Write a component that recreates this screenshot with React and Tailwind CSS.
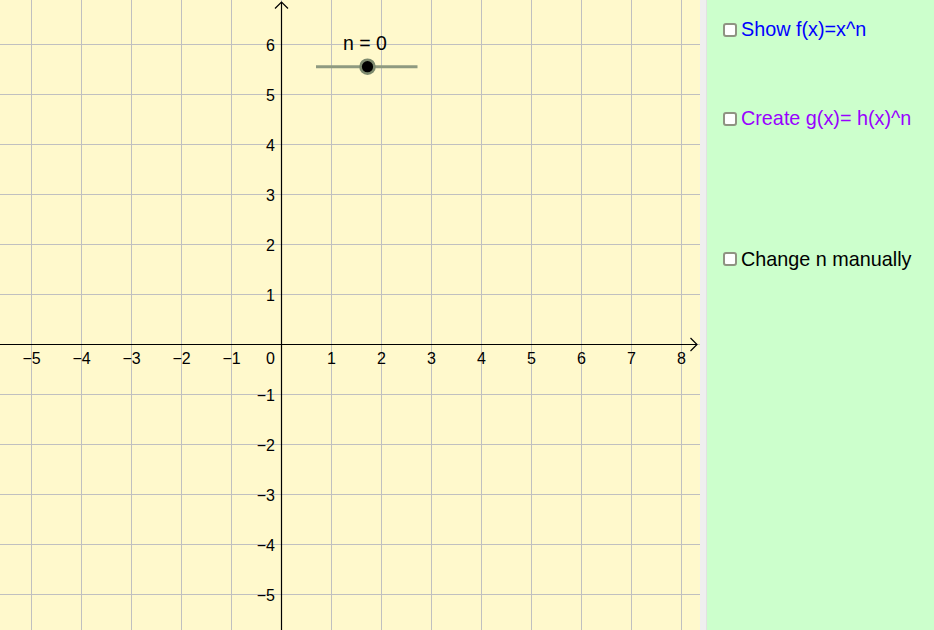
import React from 'react';

const GRID_X = Array.from({ length: 14 }, (_, i) => 31.5 + i * 50);
const GRID_Y = Array.from({ length: 12 }, (_, i) => 44.5 + i * 50);
const ORIGIN_X = 281.5;
const ORIGIN_Y = 344.5;

const fmt = (v) => (v < 0 ? `\u2212${-v}` : `${v}`);

/* ── Graphics view ── */
const Graph = () => (
    <svg width="700" height="630" className="block" style={{ fontFamily: '"Liberation Sans", Arial, sans-serif' }}>
        <rect x="0" y="0" width="700" height="630" fill="#fff9cc" />
        {GRID_X.map((x) => (
            <line key={`gx${x}`} x1={x} y1="0" x2={x} y2="630" stroke="#c0c0c0" strokeWidth="1" />
        ))}
        {GRID_Y.map((y) => (
            <line key={`gy${y}`} x1="0" y1={y} x2="700" y2={y} stroke="#c0c0c0" strokeWidth="1" />
        ))}

        {/* axes */}
        <line x1="0" y1={ORIGIN_Y} x2="697" y2={ORIGIN_Y} stroke="#000" strokeWidth="1.2" />
        <polyline points="690.5,338 697,344.5 690.5,351" fill="none" stroke="#000" strokeWidth="1.2" />
        <line x1={ORIGIN_X} y1="2" x2={ORIGIN_X} y2="630" stroke="#000" strokeWidth="1.2" />
        <polyline points="275,8.5 281.5,2 288,8.5" fill="none" stroke="#000" strokeWidth="1.2" />

        {/* x labels */}
        {GRID_X.map((x, i) => {
            const v = i - 5;
            if (v === 0) return null;
            return (
                <text key={`lx${v}`} x={x} y="363.5" fontSize="16" textAnchor="middle" fill="#000">
                    {fmt(v)}
                </text>
            );
        })}
        <text x="275" y="363.5" fontSize="16" textAnchor="end" fill="#000">0</text>

        {/* y labels */}
        {GRID_Y.map((y, i) => {
            const v = 6 - i;
            if (v === 0) return null;
            return (
                <text key={`ly${v}`} x="275" y={y + 6.5} fontSize="16" textAnchor="end" fill="#000">
                    {fmt(v)}
                </text>
            );
        })}

        {/* slider n */}
        <text x="343" y="49.5" fontSize="19.5" fill="#000">n = 0</text>
        <line x1="316" y1="66.7" x2="417.5" y2="66.7" stroke="#8f9a80" strokeWidth="3" />
        <circle cx="367.5" cy="66.7" r="8.3" fill="#7d8a6e" />
        <circle cx="367.5" cy="66.7" r="5.6" fill="#000" />
    </svg>
);

/* ── Checkbox row ── */
const Check = ({ label, color, className }) => (
    <label className={`flex items-center gap-[4px] ${className}`}>
        <span className="w-[14px] h-[14px] shrink-0 rounded-[3px] border-2 border-[#8f9382] bg-white" />
        <span className="text-[19.8px] leading-none" style={{ color }}>{label}</span>
    </label>
);

export default function App() {
    return (
        <div className="w-[934px] h-[630px] flex overflow-hidden bg-white" style={{ fontFamily: '"Liberation Sans", Arial, sans-serif' }}>
            <div className="w-[700px] h-full shrink-0">
                <Graph />
            </div>
            <div className="w-[7px] h-full shrink-0 bg-[#efefef] border-r border-[#e2e2e2]" />
            <div className="flex-1 h-full bg-[#ccffcc] pl-[16px] pt-[20px] flex flex-col">
                <Check label="Show f(x)=x^n" color="#0000ff" className="" />
                <Check label="Create g(x)= h(x)^n" color="#9900ff" className="mt-[69px]" />
                <Check label="Change n manually" color="#000000" className="mt-[121px]" />
            </div>
        </div>
    );
}
